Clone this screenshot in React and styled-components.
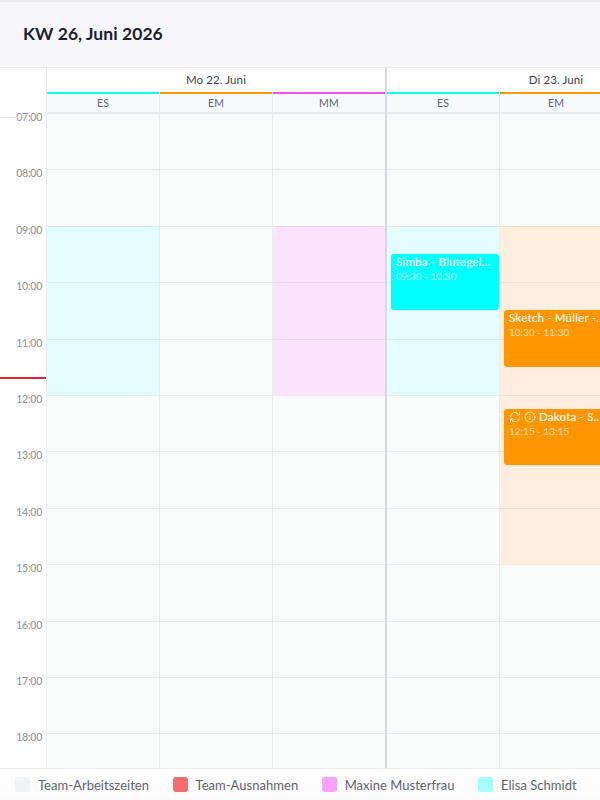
import React from "react";
import styled, { createGlobalStyle } from "styled-components";

const Global = createGlobalStyle`
  html, body { margin: 0; padding: 0; background: #fff; overflow: hidden; }
  * { box-sizing: border-box; }
  body { font-family: Lato, "Open Sans", sans-serif; }
`;
const HOUR = 56.4;
const START = 7;

const Page = styled.div`
  width: 600px; height: 800px; display: flex; flex-direction: column; overflow: hidden; position: relative;
`;
const TopBar = styled.header`
  height: 68px; flex: none; background: #f7f7f9;
  border-top: 2px solid #ebebee; border-bottom: 1px solid #ebebee;
  display: flex; align-items: center; padding: 0 0 2px 23px;
`;
const Title = styled.h1`
  margin: 0; font-size: 17.5px; font-weight: 700; color: #1a2033; letter-spacing: 0.05px;
`;
const Calendar = styled.div`
  flex: 1; min-height: 0; display: flex; overflow: hidden;
`;
const Gutter = styled.div`
  width: 47px; flex: none; display: flex; flex-direction: column; padding-top: 45px;
  border-right: 1px solid #e9eaed;
`;
const TimeLabel = styled.div`
  height: ${HOUR}px; flex: none; font-size: 10.5px; line-height: 14px; color: #8b8f9c;
  text-align: right; padding-right: 4px; letter-spacing: -0.25px; position: relative; top: -3px;
  ${p => p.$tick && `
    &::before {
      content: ""; position: absolute; left: 0; top: 7px; width: 18px; height: 1px; background: #e6e7ea;
    }
  `}
`;
const NowLine = styled.div`
  position: absolute; left: 0; top: 377px; width: 46px; height: 2px; background: #e8202f;
`;
const Day = styled.section`
  flex: none; width: ${p => p.$w}px; display: flex; flex-direction: column;
  border-right: ${p => (p.$sep ? "2px solid #d6d8e3" : "none")};
`;
const DayName = styled.div`
  height: 24px; flex: none; background: #fff; font-size: 11.5px; line-height: 23px; color: #3b3f4d;
  text-align: center; letter-spacing: 0.1px;
`;
const Resources = styled.div`
  display: flex; flex: 1; min-height: 0;
`;
const Resource = styled.div`
  width: ${p => p.$w}px; flex: none; display: flex; flex-direction: column;
  border-left: ${p => (p.$first ? "none" : "1px solid #e9eaed")};
`;
const ResourceHead = styled.div`
  height: 22px; flex: none; background: #f8f9fb;
  border-top: 2px solid ${p => p.$color};
  border-bottom: 2px solid #e9eaef;
  font-size: 10.5px; line-height: 18px; text-align: center; color: #5d616e; letter-spacing: 0.2px;
`;
const Slots = styled.div`
  flex: 1; min-height: 0; position: relative; background: #f9fafa;
`;
const Hour = styled.div`
  height: ${HOUR}px; border-bottom: 1px solid rgba(20, 40, 60, 0.07); position: relative; z-index: 1;
`;
const Shift = styled.div`
  position: absolute; left: 0; right: 0; background: ${p => p.$color};
`;
const EventCard = styled.div`
  position: absolute; z-index: 2; left: 3.5px; width: ${p => p.$w}px; height: ${HOUR}px; overflow: hidden;
  border-radius: 3px; background: ${p => p.$color}; color: #fff; padding: 0 5.5px;
  white-space: nowrap;
`;
const EventTitle = styled.div`
  font-size: 11.5px; line-height: 16px; font-weight: 500; letter-spacing: 0.2px;
  display: flex; align-items: center; gap: 3px;
`;
const EventTime = styled.div`
  font-size: 10px; line-height: 13px; opacity: 0.7; letter-spacing: 0;
`;
const Legend = styled.footer`
  height: 32px; flex: none; border-top: 1px solid #e9eaed;
  display: flex; align-items: center; padding: 0 0 0 15px; gap: 23.5px; white-space: nowrap;
  background: linear-gradient(#fff, #fafafa);
`;
const LegendItem = styled.div`
  display: flex; align-items: center; gap: 8px; font-size: 13px; color: #5e6472; letter-spacing: 0.03px;
`;
const Swatch = styled.span`
  width: 15px; height: 15px; border-radius: 3px; background: ${p => p.$color};
`;

const hours = Array.from({ length: 12 }, (_, i) => i + START);
const fmt = h => `${String(h).padStart(2, "0")}:00`;

const RefreshIcon = () => (
  <svg width="12" height="12" viewBox="0 0 24 24" fill="none" stroke="currentColor" strokeWidth="1.7" strokeLinecap="round" strokeLinejoin="round">
    <path d="M3 11a9 9 0 0 1 15-6l3 3M21 3v5h-5" />
    <path d="M21 13a9 9 0 0 1-15 6l-3-3M3 21v-5h5" />
  </svg>
);
const InfoIcon = () => (
  <svg width="12" height="12" viewBox="0 0 24 24" fill="none" stroke="currentColor" strokeWidth="1.7" strokeLinecap="round">
    <circle cx="12" cy="12" r="10" />
    <path d="M12 11v6M12 7v.5" />
  </svg>
);

const CYAN = "#00ffff", ORANGE = "#ff9500", PINK = "#f54ff0";

function Column({ w, first, code, color, shift, shiftColor, children }) {
  return (
    <Resource $w={w} $first={first}>
      <ResourceHead $color={color}>{code}</ResourceHead>
      <Slots>
        {hours.map(h => <Hour key={h} />)}
        <Hour />
        {shift && (
          <Shift $color={shiftColor} style={{ top: (shift[0] - START) * HOUR - 0.8, height: (shift[1] - shift[0]) * HOUR }} />
        )}
        {children}
      </Slots>
    </Resource>
  );
}

function Event({ start, w, color, title, time, icons }) {
  return (
    <EventCard $w={w} $color={color} style={{ top: (start - START) * HOUR - 1 }}>
      <EventTitle>
        {icons && <><RefreshIcon /><InfoIcon /></>}
        <span>{title}</span>
      </EventTitle>
      <EventTime>{time}</EventTime>
    </EventCard>
  );
}

export default function App() {
  return (
    <Page>
      <Global />
      <TopBar><Title>KW 26, Juni 2026</Title></TopBar>
      <Calendar>
        <Gutter>
          {hours.map((h, i) => <TimeLabel key={h} $tick={i === 0}>{fmt(h)}</TimeLabel>)}
        </Gutter>
        <NowLine />
        <Day $sep $w={340}>
          <DayName>Mo 22. Juni</DayName>
          <Resources>
            <Column w={112} first code="ES" color={CYAN} shift={[9, 12]} shiftColor="#e2fdfe" />
            <Column w={113} code="EM" color={ORANGE} />
            <Column w={113} code="MM" color={PINK} shift={[9, 12]} shiftColor="#fde2fd" />
          </Resources>
        </Day>
        <Day $w={338}>
          <DayName>Di 23. Juni</DayName>
          <Resources>
            <Column w={112} first code="ES" color={CYAN} shift={[9, 12]} shiftColor="#e2fdfe">
              <Event start={9.5} w={108} color={CYAN} title="Simba - Blutegel…" time="09:30 - 10:30" />
            </Column>
            <Column w={113} code="EM" color={ORANGE} shift={[9, 15]} shiftColor="#ffeedd">
              <Event start={10.5} w={108} color={ORANGE} title="Sketch - Müller -…" time="10:30 - 11:30" />
              <Event start={12.25} w={108} color={ORANGE} icons title="Dakota - S…" time="12:15 - 13:15" />
            </Column>
          </Resources>
        </Day>
      </Calendar>
      <Legend>
        <LegendItem><Swatch $color="#f1f2f3" />Team-Arbeitszeiten</LegendItem>
        <LegendItem><Swatch $color="#f56c6f" />Team-Ausnahmen</LegendItem>
        <LegendItem><Swatch $color="#ffa0fa" />Maxine Musterfrau</LegendItem>
        <LegendItem><Swatch $color="#a5fdfe" />Elisa Schmidt</LegendItem>
      </Legend>
    </Page>
  );
}
